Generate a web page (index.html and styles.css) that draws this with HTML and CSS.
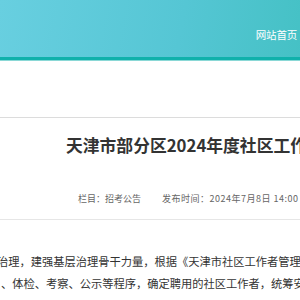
FILE: index.html
```html
<!DOCTYPE html>
<html lang="zh-CN">
<head>
    <meta charset="UTF-8">
    <meta name="viewport" content="width=device-width, initial-scale=1.0">
    <title>天津市部分区2024年度社区工作者招聘公告</title>
    <link rel="stylesheet" href="styles.css">
</head>
<body>
<div class="header">
    <div class="nav">
        <a href="/">网站首页</a>
    </div>
</div>
<div class="header-line"></div>
<div class="crumb"></div>
<div class="article">
    <h1 class="title">天津市部分区2024年度社区工作者招聘公告</h1>
    <div class="meta">
        <span>栏目：招考公告</span>
        <span class="date">发布时间：2024年7月8日 14:00</span>
    </div>
    <div class="content">
        <p class="line first">治理，建强基层治理骨干力量，根据《天津市社区工作者管理办法》等有关规定</p>
        <p class="line">、体检、考察、公示等程序，确定聘用的社区工作者，统筹安排到社区工作。</p>
    </div>
</div>
</body>
</html>
```

FILE: styles.css
```css
body {
    font-family: "Noto Sans CJK SC", "Noto Sans", sans-serif;
    margin: 0;
    padding: 0;
    background-color: #fff;
    color: #333;
    overflow: hidden;
}
.header {
    height: 57px;
    background: linear-gradient(100deg, #68cfe0 0%, #55c6d4 60%, #45c1c5 100%);
    border-bottom: 3px solid #10b1ab;
    display: flex;
    justify-content: flex-end;
    align-items: center;
}
.header-line {
    height: 1px;
    background-color: #8ad8d6;
}
.nav {
    padding: 6px 3px 0 0;
}
.nav a {
    color: #fff;
    font-size: 10.5px;
    text-decoration: none;
    letter-spacing: -0.2px;
}
.crumb {
    height: 56px;
    border-bottom: 1px solid #dcdcdc;
}
.article {
    width: 100%;
}
.title {
    margin: 15px 0 0;
    padding-left: 66px;
    font-size: 16.8px;
    line-height: 24px;
    font-weight: bold;
    color: #333;
    white-space: nowrap;
}
.meta {
    margin-top: 34px;
    padding: 0 0 12px 78px;
    font-size: 9px;
    line-height: 16px;
    color: #666;
    white-space: nowrap;
    border-bottom: 1px solid #e6e6e6;
}
.meta .date {
    margin-left: 19px;
    letter-spacing: 0.5px;
}
.content {
    padding-top: 30px;
}
.line {
    margin: 0 0 0 1px;
    font-size: 11.25px;
    line-height: 22px;
    color: #333;
    white-space: nowrap;
}
.line.first {
    margin-left: -3px;
}
```
